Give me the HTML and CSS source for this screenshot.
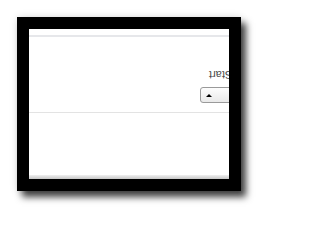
FILE: index.html
```html
<!DOCTYPE html>
<html>
<head>
<meta charset="utf-8">
<link rel="stylesheet" href="styles.css">
</head>
<body>
<div class="frame">
  <div class="panel">
    <div class="topline"></div>
    <div class="label"><span class="label-text">Start</span></div>
    <div class="select-row">
      <div class="select"><span class="arrow"></span></div>
    </div>
    <div class="divider"></div>
    <div class="spacer"></div>
    <div class="bottomline"></div>
  </div>
</div>
</body>
</html>
```
FILE: styles.css
```css
html, body {
  margin: 0;
  padding: 0;
  background: #ffffff;
}
body {
  width: 259px;
  height: 209px;
  overflow: hidden;
  font-family: "Liberation Sans", Arial, sans-serif;
}
.frame {
  margin: 17px 0 0 17px;
  width: 200px;
  height: 150px;
  border: 12px solid #000;
  box-shadow: 5px 6px 7px rgba(0,0,0,0.75), 0 0 8px rgba(0,0,0,0.12);
}
.panel {
  width: 200px;
  height: 150px;
  background: #fff;
  overflow: hidden;
  display: flex;
  flex-direction: column;
  padding-top: 6px;
  box-sizing: border-box;
}
.topline {
  height: 2px;
  background: #e6e7ea;
  flex: none;
}
.label {
  margin-top: 31px;
  height: 13px;
  display: flex;
  justify-content: flex-end;
  flex: none;
}
.label-text {
  display: inline-block;
  font-size: 11px;
  line-height: 13px;
  color: #4a4a4a;
  transform: rotate(180deg);
  margin-right: -3px;
}
.select-row {
  margin-top: 6px;
  display: flex;
  justify-content: flex-end;
  flex: none;
}
.select {
  width: 40px;
  height: 16px;
  box-sizing: border-box;
  margin-right: -11px;
  border: 1px solid #9a9a9a;
  border-radius: 3px;
  background: linear-gradient(to bottom, #fdfdfd, #e9e9e9);
  display: flex;
  align-items: center;
  padding-left: 5px;
}
.arrow {
  width: 0;
  height: 0;
  border-left: 3px solid transparent;
  border-right: 3px solid transparent;
  border-bottom: 3px solid #000;
}
.divider {
  margin-top: 9px;
  height: 1px;
  background: #e3e3e3;
  flex: none;
}
.spacer {
  flex: 1;
}
.bottomline {
  height: 4px;
  flex: none;
  background: linear-gradient(to bottom, #f0f0f0, #c6c6c6);
}
```
